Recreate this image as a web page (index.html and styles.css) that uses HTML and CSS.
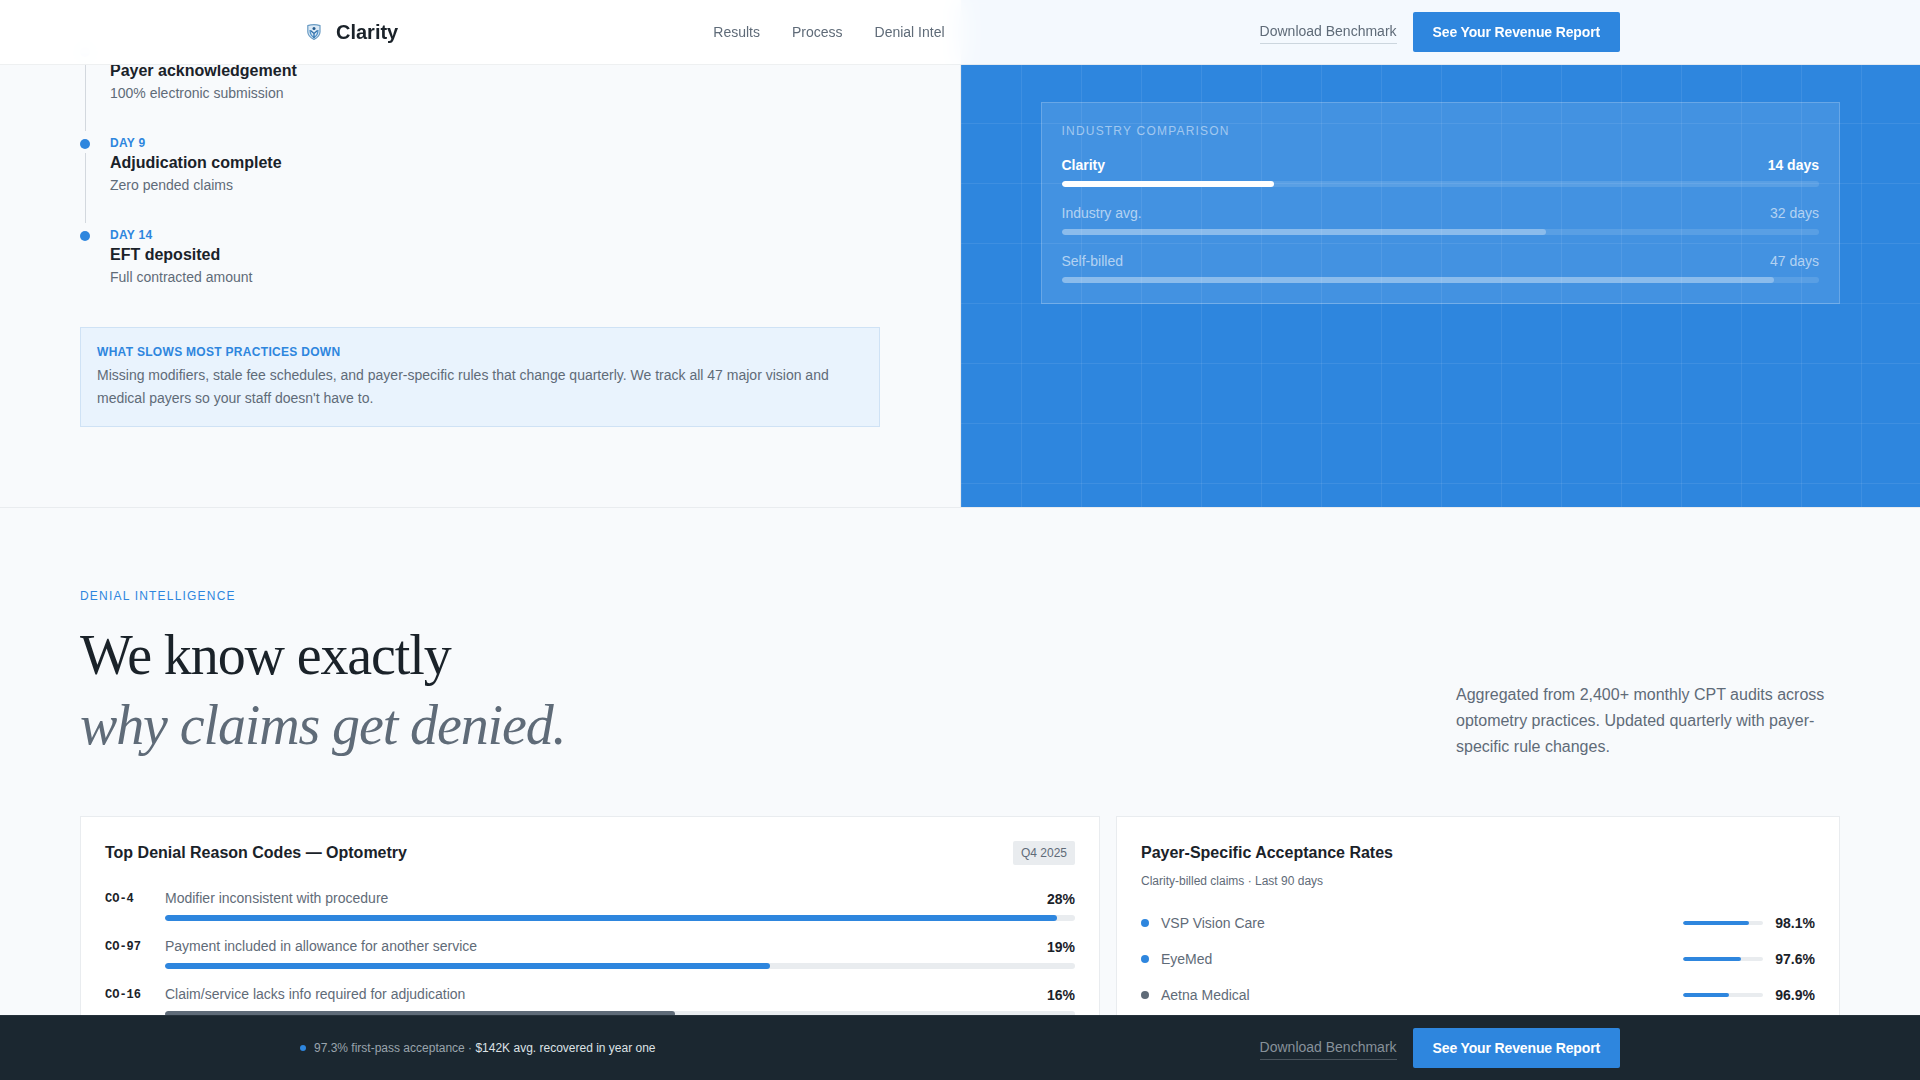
FILE: index.html
```html
<!DOCTYPE html>
<html lang="en">
<head>
    <meta charset="UTF-8">
    <meta name="viewport" content="width=device-width, initial-scale=1.0">
    <title>Clarity</title>
    <link rel="stylesheet" href="styles.css">
</head>
<body>

<!-- Header -->
<header class="site-header">
    <div class="container">
        <a class="logo" href="#">
            <svg class="logo-icon" viewBox="0 0 28 28" aria-hidden="true">
                <path d="M7.8 7.6 Q14 5.8 20 7.6 V14 Q19.8 18.6 14 21.4 Q8 18.6 7.8 14 Z" fill="#dbe9f5" stroke="#6a9cc4" stroke-width="1.2"/>
                <path d="M10 12 Q10 17.2 14 19.5 Q18 17.2 18 12" fill="none" stroke="#4a8fc9" stroke-width="1.2"/>
                <circle cx="14" cy="10.6" r="1.5" fill="#245a8c"/>
                <path d="M10.5 12.5 L14 15.5 L17.5 12.5 M14 15 V20" fill="none" stroke="#2f6fa8" stroke-width="1.3"/>
            </svg>
            <span>Clarity</span>
        </a>
        <nav class="nav">
            <a href="#results">Results</a>
            <a href="#process">Process</a>
            <a href="#denial-intel">Denial Intel</a>
        </nav>
        <div class="actions">
            <a class="download" href="#">Download Benchmark</a>
            <button class="btn" type="button">See Your Revenue Report</button>
        </div>
    </div>
</header>

<main>
    <!-- Process -->
    <section class="process" id="process">
        <div class="process-left">
            <ol class="timeline">
                <li class="step">
                    <div class="step-marker"><span class="step-dot"></span><span class="step-line"></span></div>
                    <div class="step-body step-body-first">
                        <h3 class="step-title">Payer acknowledgement</h3>
                        <p class="step-text">100% electronic submission</p>
                    </div>
                </li>
                <li class="step">
                    <div class="step-marker"><span class="step-dot"></span><span class="step-line"></span></div>
                    <div class="step-body">
                        <p class="step-day">DAY 9</p>
                        <h3 class="step-title">Adjudication complete</h3>
                        <p class="step-text">Zero pended claims</p>
                    </div>
                </li>
                <li class="step">
                    <div class="step-marker"><span class="step-dot"></span></div>
                    <div class="step-body">
                        <p class="step-day">DAY 14</p>
                        <h3 class="step-title">EFT deposited</h3>
                        <p class="step-text">Full contracted amount</p>
                    </div>
                </li>
            </ol>
            <div class="callout">
                <h4 class="callout-title">WHAT SLOWS MOST PRACTICES DOWN</h4>
                <p>Missing modifiers, stale fee schedules, and payer-specific rules that change quarterly. We track all 47 major vision and medical payers so your staff doesn't have to.</p>
            </div>
        </div>

        <div class="process-right">
            <div class="compare">
                <h4 class="compare-title">INDUSTRY COMPARISON</h4>
                <div class="compare-row compare-main">
                    <div class="row-head"><span>Clarity</span><span>14 days</span></div>
                    <div class="track"><div class="fill" style="width: 28%"></div></div>
                </div>
                <div class="compare-row">
                    <div class="row-head"><span>Industry avg.</span><span>32 days</span></div>
                    <div class="track"><div class="fill" style="width: 64%"></div></div>
                </div>
                <div class="compare-row">
                    <div class="row-head"><span>Self-billed</span><span>47 days</span></div>
                    <div class="track"><div class="fill" style="width: 94%"></div></div>
                </div>
            </div>
        </div>
    </section>

    <!-- Denial intelligence -->
    <section class="denial" id="denial-intel">
        <p class="eyebrow">DENIAL INTELLIGENCE</p>
        <div class="denial-head">
            <h2>We know exactly<br><em>why claims get denied.</em></h2>
            <p>Aggregated from 2,400+ monthly CPT audits across optometry practices. Updated quarterly with payer-specific rule changes.</p>
        </div>

        <div class="cards">
            <article class="card card-codes">
                <div class="card-head">
                    <h3>Top Denial Reason Codes — Optometry</h3>
                    <span class="badge">Q4 2025</span>
                </div>
                <ul class="codes">
                    <li class="code-row">
                        <span class="code">CO-4</span>
                        <div class="code-body">
                            <div class="row-head"><span class="code-name">Modifier inconsistent with procedure</span><strong>28%</strong></div>
                            <div class="track"><div class="fill" style="width: 98%"></div></div>
                        </div>
                    </li>
                    <li class="code-row">
                        <span class="code">CO-97</span>
                        <div class="code-body">
                            <div class="row-head"><span class="code-name">Payment included in allowance for another service</span><strong>19%</strong></div>
                            <div class="track"><div class="fill" style="width: 66.5%"></div></div>
                        </div>
                    </li>
                    <li class="code-row">
                        <span class="code">CO-16</span>
                        <div class="code-body">
                            <div class="row-head"><span class="code-name">Claim/service lacks info required for adjudication</span><strong>16%</strong></div>
                            <div class="track"><div class="fill fill-muted" style="width: 56%"></div></div>
                        </div>
                    </li>
                </ul>
            </article>

            <article class="card card-payers">
                <div class="card-head">
                    <h3>Payer-Specific Acceptance Rates</h3>
                </div>
                <p class="card-sub">Clarity-billed claims · Last 90 days</p>
                <ul class="payers">
                    <li class="payer-row">
                        <span class="payer-dot"></span>
                        <span class="payer-name">VSP Vision Care</span>
                        <div class="track"><div class="fill" style="width: 82.5%"></div></div>
                        <strong>98.1%</strong>
                    </li>
                    <li class="payer-row">
                        <span class="payer-dot"></span>
                        <span class="payer-name">EyeMed</span>
                        <div class="track"><div class="fill" style="width: 72.5%"></div></div>
                        <strong>97.6%</strong>
                    </li>
                    <li class="payer-row">
                        <span class="payer-dot payer-dot-muted"></span>
                        <span class="payer-name">Aetna Medical</span>
                        <div class="track"><div class="fill" style="width: 57.5%"></div></div>
                        <strong>96.9%</strong>
                    </li>
                </ul>
            </article>
        </div>
    </section>
</main>

<!-- Sticky bottom bar -->
<div class="bottom-bar">
    <div class="container">
        <p class="bottom-stat"><span class="bottom-dot"></span><span>97.3% first-pass acceptance · <b>$142K avg. recovered in year one</b></span></p>
        <div class="actions">
            <a class="download" href="#">Download Benchmark</a>
            <button class="btn" type="button">See Your Revenue Report</button>
        </div>
    </div>
</div>

</body>
</html>
```
FILE: styles.css
```css
:root {
    --blue: #2e86de;
    --ink: #1a2229;
    --slate: #5f6b78;
    --line: #e9ecef;
    --bg: #f8fafc;
}

* {
    box-sizing: border-box;
    margin: 0;
    padding: 0;
}

body {
    font-family: "Liberation Sans", Arial, sans-serif;
    font-size: 14px;
    line-height: 20px;
    color: var(--ink);
    background: var(--bg);
}

ul, ol {
    list-style: none;
}

a {
    color: inherit;
    text-decoration: none;
}

.container {
    width: 100%;
    max-width: 1320px;
    height: 64px;
    margin: 0 auto;
    display: flex;
    align-items: center;
    justify-content: space-between;
}

/* Header */
.site-header {
    position: fixed;
    top: 0;
    left: 0;
    right: 0;
    z-index: 10;
    background: rgba(255, 255, 255, 0.95);
    backdrop-filter: blur(12px);
    border-bottom: 1px solid rgba(93, 107, 122, 0.1);
}

.logo {
    display: flex;
    align-items: center;
    gap: 8px;
    font-size: 20px;
    font-weight: bold;
}

.logo-icon {
    width: 28px;
    height: 28px;
}

.nav {
    display: flex;
    gap: 32px;
    color: var(--slate);
}

.actions {
    display: flex;
    align-items: center;
    gap: 16px;
}

.download {
    line-height: 23px;
    color: var(--slate);
    border-bottom: 1px solid #ccd6de;
}

.btn {
    height: 40px;
    padding: 0 20px;
    font-family: inherit;
    font-size: 14px;
    font-weight: bold;
    letter-spacing: -0.01em;
    color: #fff;
    background: var(--blue);
    border: none;
    border-radius: 2px;
    cursor: pointer;
}

/* Process */
.process {
    display: grid;
    grid-template-columns: 1fr 1fr;
    gap: 1px;
    background: var(--line);
    border-bottom: 1px solid var(--line);
}

.process-left {
    padding: 43px 80px 80px;
    background: var(--bg);
}

.process-right {
    padding: 102px 80px 80px;
    background-color: var(--blue);
    background-image:
        linear-gradient(rgba(255, 255, 255, 0.08) 1px, transparent 1px),
        linear-gradient(90deg, rgba(255, 255, 255, 0.08) 1px, transparent 1px);
    background-size: 60px 60px;
    background-position: 0 3px;
}

.step {
    display: flex;
    gap: 20px;
}

.step-marker {
    display: flex;
    flex-direction: column;
    align-items: center;
    width: 10px;
}

.step-dot {
    width: 10px;
    height: 10px;
    margin-top: 4px;
    border-radius: 50%;
    background: var(--blue);
}

.step-line {
    flex: 1;
    width: 1px;
    margin: 4px 0;
    background: #d3d8de;
}

.step-body {
    padding-bottom: 32px;
}

.step-body-first {
    padding-top: 16px;
}

.step:last-child .step-body {
    padding-bottom: 0;
}

.step-day {
    font-size: 12px;
    line-height: 16px;
    font-weight: bold;
    letter-spacing: 0.025em;
    color: var(--blue);
}

.step-title {
    font-size: 16px;
    line-height: 24px;
}

.step-text {
    color: var(--slate);
}

.callout {
    margin-top: 40px;
    padding: 16px;
    line-height: 23px;
    color: var(--slate);
    background: #e9f3fd;
    border: 1px solid #cfe2f5;
}

.callout-title {
    margin-bottom: 4px;
    font-size: 12px;
    line-height: 16px;
    letter-spacing: 0.025em;
    color: var(--blue);
}

/* Bars */
.row-head {
    display: flex;
    justify-content: space-between;
    margin-bottom: 6px;
}

.track {
    height: 6px;
    border-radius: 3px;
    background: #e9ecef;
    overflow: hidden;
}

.fill {
    height: 100%;
    border-radius: 3px;
    background: var(--blue);
}

.fill-muted {
    background: var(--slate);
}

.compare {
    display: flex;
    flex-direction: column;
    gap: 16px;
    padding: 20px;
    color: rgba(255, 255, 255, 0.6);
    background: rgba(255, 255, 255, 0.1);
    border: 1px solid rgba(255, 255, 255, 0.2);
}

.compare-title {
    font-size: 12px;
    line-height: 16px;
    font-weight: normal;
    letter-spacing: 0.1em;
    color: rgba(255, 255, 255, 0.5);
}

.compare .track {
    background: rgba(255, 255, 255, 0.12);
}

.compare .fill {
    background: rgba(255, 255, 255, 0.3);
}

.compare-main .row-head {
    font-weight: bold;
    color: #fff;
}

.compare-main .fill {
    background: #fff;
}

/* Denial intelligence */
.denial {
    padding: 80px 80px 24px;
}

.eyebrow {
    margin-bottom: 16px;
    font-size: 12px;
    line-height: 16px;
    letter-spacing: 0.1em;
    color: var(--blue);
}

.denial-head {
    display: flex;
    align-items: flex-end;
    justify-content: space-between;
    margin-bottom: 56px;
}

.denial-head h2 {
    font-family: "Liberation Serif", "Times New Roman", serif;
    font-size: 56px;
    line-height: 70px;
    font-weight: normal;
    letter-spacing: -0.02em;
}

.denial-head em {
    color: var(--slate);
}

.denial-head p {
    width: 384px;
    font-size: 16px;
    line-height: 26px;
    color: var(--slate);
}

.cards {
    display: grid;
    grid-template-columns: repeat(12, 1fr);
    gap: 16px;
}

.card {
    padding: 24px;
    color: var(--slate);
    background: #fff;
    border: 1px solid var(--line);
}

.card-codes {
    grid-column: span 7;
}

.card-payers {
    grid-column: span 5;
}

.card strong {
    color: var(--ink);
}

.card-head {
    display: flex;
    align-items: center;
    justify-content: space-between;
}

.card-head h3 {
    font-size: 16px;
    line-height: 24px;
    color: var(--ink);
}

.badge {
    padding: 4px 8px;
    font-size: 12px;
    line-height: 16px;
    background: #e9ecef;
    border-radius: 2px;
}

.codes,
.payers {
    display: flex;
    flex-direction: column;
    gap: 16px;
    margin-top: 24px;
}

.code-row {
    display: flex;
    gap: 12px;
}

.code {
    width: 48px;
    font-family: "Liberation Mono", "Courier New", monospace;
    font-size: 12px;
    font-weight: bold;
    color: var(--ink);
}

.code-body {
    flex: 1;
}

.code-name {
    line-height: 18px;
}

.card-sub {
    margin-top: 8px;
    font-size: 12px;
    line-height: 16px;
}

.payer-row {
    display: flex;
    align-items: center;
    gap: 12px;
}

.payer-dot {
    width: 8px;
    height: 8px;
    border-radius: 50%;
    background: var(--blue);
}

.payer-dot-muted {
    background: var(--slate);
}

.payer-name {
    flex: 1;
}

.payer-row .track {
    width: 80px;
    height: 4px;
}

/* Bottom bar */
.bottom-bar {
    position: fixed;
    left: 0;
    right: 0;
    bottom: 0;
    z-index: 10;
    background: #1b2730;
    border-top: 1px solid #25313a;
}

.bottom-stat {
    display: flex;
    align-items: center;
    gap: 8px;
    font-size: 12px;
    line-height: 16px;
    color: #9aa4ad;
}

.bottom-stat b {
    font-weight: normal;
    color: #dde2e6;
}

.bottom-dot {
    width: 6px;
    height: 6px;
    border-radius: 50%;
    background: var(--blue);
}

.bottom-bar .download {
    color: #87919a;
    border-bottom-color: #4a545d;
}
```
